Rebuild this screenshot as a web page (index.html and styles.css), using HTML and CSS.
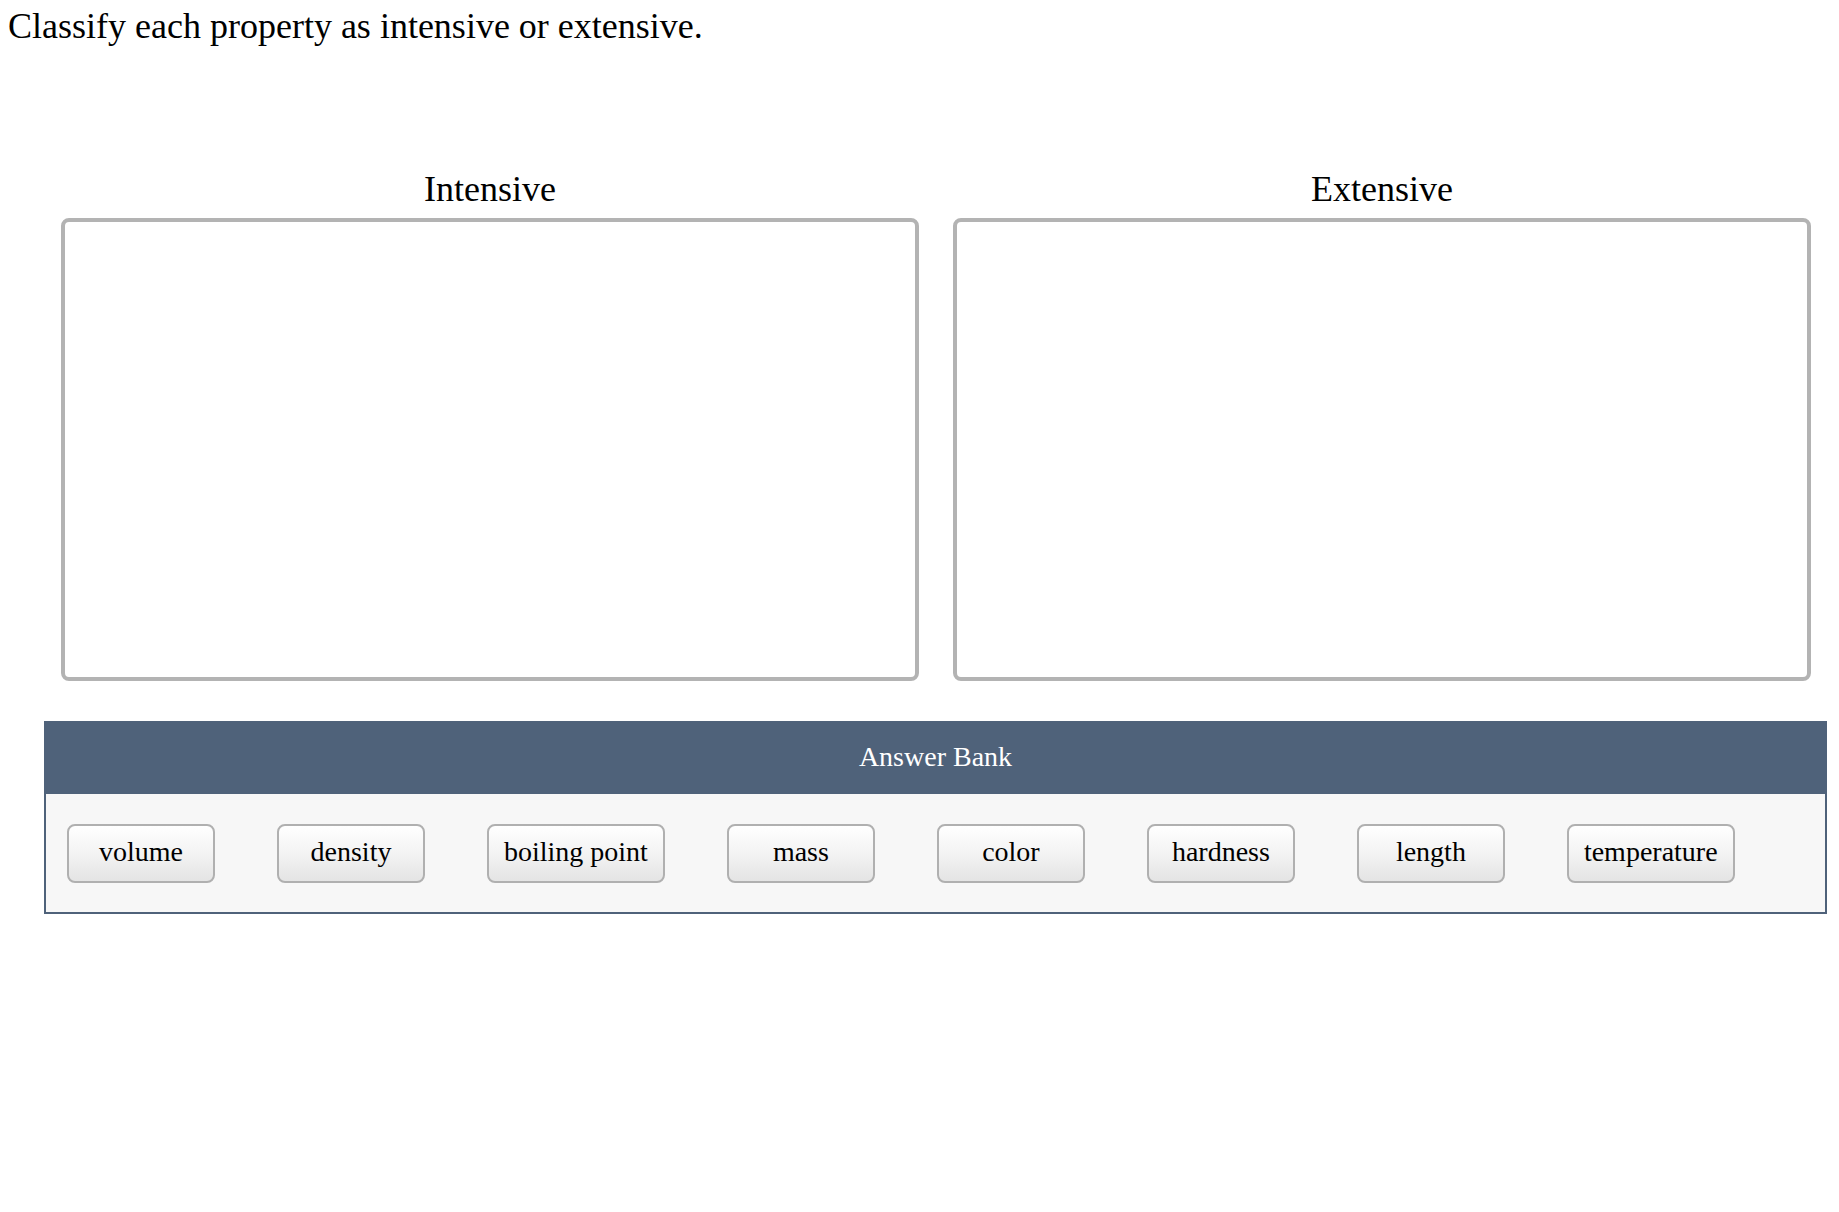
FILE: index.html
```html
<!DOCTYPE html>
<html lang="en">
<head>
<meta charset="utf-8">
<title>Classify properties</title>
<link rel="stylesheet" href="styles.css">
</head>
<body>
<p class="prompt">Classify each property as intensive or extensive.</p>
<div class="columns">
  <div class="column">
    <div class="column-label">Intensive</div>
    <div class="dropzone"></div>
  </div>
  <div class="column">
    <div class="column-label">Extensive</div>
    <div class="dropzone"></div>
  </div>
</div>
<div class="bank">
  <div class="bank-header">Answer Bank</div>
  <div class="bank-body">
    <div class="chip">volume</div>
    <div class="chip">density</div>
    <div class="chip">boiling point</div>
    <div class="chip">mass</div>
    <div class="chip">color</div>
    <div class="chip">hardness</div>
    <div class="chip">length</div>
    <div class="chip">temperature</div>
  </div>
</div>
</body>
</html>
```
FILE: styles.css
```css
html, body {
  margin: 0;
  padding: 0;
  background: #ffffff;
}
body {
  font-family: "Liberation Serif", "Times New Roman", serif;
  color: #000;
  padding: 6px 0 0 8px;
}
.prompt {
  margin: 0;
  font-size: 36px;
  line-height: 41px;
}
.columns {
  display: grid;
  grid-template-columns: 858px 858px;
  column-gap: 34px;
  margin: 122px 0 0 53px;
}
.column {
  display: flex;
  flex-direction: column;
}
.column-label {
  font-size: 36px;
  line-height: 41px;
  text-align: center;
  margin-bottom: 8px;
}
.dropzone {
  box-sizing: border-box;
  height: 463px;
  border: 4px solid #b3b3b3;
  border-radius: 8px;
  background: #fff;
}
.bank {
  box-sizing: border-box;
  width: 1783px;
  margin: 40px 0 0 36px;
  border: 2px solid #4f627a;
  background: #f7f7f7;
}
.bank-header {
  box-sizing: border-box;
  background: #4f627a;
  color: #fff;
  font-size: 28px;
  height: 71px;
  padding-bottom: 4px;
  display: flex;
  align-items: center;
  justify-content: center;
}
.bank-body {
  display: flex;
  flex-wrap: wrap;
  align-items: center;
  padding: 30px 21px 29px;
  column-gap: 62px;
}
.chip {
  box-sizing: border-box;
  min-width: 148px;
  height: 59px;
  padding: 0 15px 4px;
  border: 2px solid #b0b0b0;
  border-radius: 8px;
  background: linear-gradient(to bottom, #ffffff 0%, #f3f3f3 50%, #e4e4e4 100%);
  font-size: 28px;
  display: flex;
  align-items: center;
  justify-content: center;
  white-space: nowrap;
}
```
